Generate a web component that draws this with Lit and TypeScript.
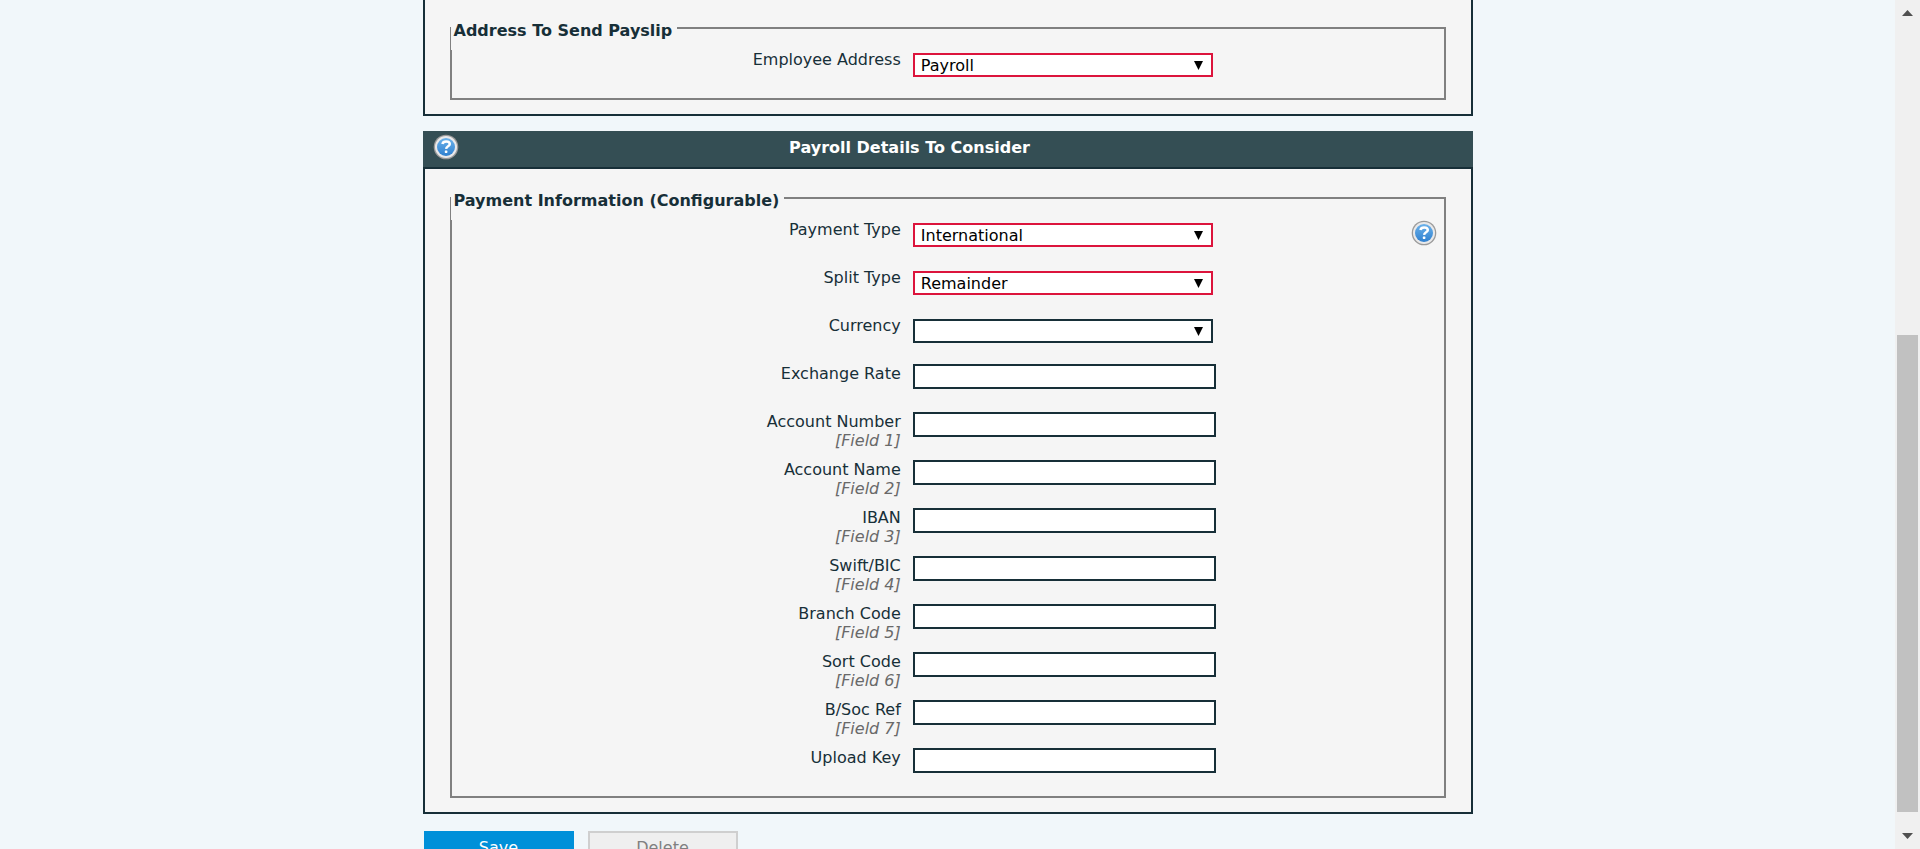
import { LitElement, html, css, svg, nothing } from "lit";
import { customElement, property } from "lit/decorators.js";

interface Field {
  id: string;
  label: string;
  hint?: string;
  options?: string[];
  required?: boolean;
  help?: boolean;
}

const addressFields: Field[] = [
  { id: "employee-address", label: "Employee Address", options: ["Payroll"], required: true },
];

const paymentFields: Field[] = [
  { id: "payment-type", label: "Payment Type", options: ["International"], required: true, help: true },
  { id: "split-type", label: "Split Type", options: ["Remainder"], required: true },
  { id: "currency", label: "Currency", options: [""] },
  { id: "exchange-rate", label: "Exchange Rate" },
  { id: "account-number", label: "Account Number", hint: "[Field 1]" },
  { id: "account-name", label: "Account Name", hint: "[Field 2]" },
  { id: "iban", label: "IBAN", hint: "[Field 3]" },
  { id: "swift", label: "Swift/BIC", hint: "[Field 4]" },
  { id: "branch-code", label: "Branch Code", hint: "[Field 5]" },
  { id: "sort-code", label: "Sort Code", hint: "[Field 6]" },
  { id: "bsoc-ref", label: "B/Soc Ref", hint: "[Field 7]" },
  { id: "upload-key", label: "Upload Key" },
];

@customElement("help-button")
export class HelpButton extends LitElement {
  static styles = css`
    :host {
      display: block;
      width: 26px;
      height: 26px;
    }
    .help {
      display: block;
      width: 26px;
      height: 26px;
      padding: 0;
      border: 0;
      background: none;
      cursor: pointer;
    }
    .glyph {
      display: block;
    }
  `;

  render() {
    return html`<button class="help" type="button" aria-label="Help">
      <svg class="glyph" width="26" height="26" viewBox="0 0 26 26" aria-hidden="true">
        <defs>
          <linearGradient id="ball" x1="0" y1="0" x2="0" y2="1">
            <stop offset="0" stop-color="#6cb2ea" />
            <stop offset="1" stop-color="#2f80cf" />
          </linearGradient>
        </defs>
        <circle cx="13" cy="13" r="12.3" fill="#9a9a9a" />
        <circle cx="13" cy="13" r="11" fill="#e9e9ea" />
        <circle cx="13" cy="13" r="9" fill="url(#ball)" />
        <path d="M9.4 9.9C9.8 8.1 11.3 7.4 13.1 7.4C15.3 7.4 16.8 8.4 16.8 10.1C16.8 12.3 13.3 12.2 13.1 14.8"
          fill="none" stroke="#fff" stroke-width="2.5" />
        <rect x="11.8" y="16.4" width="2.6" height="2.5" rx="0.6" fill="#fff" />
      </svg>
    </button>`;
  }
}

@customElement("field-group")
export class FieldGroup extends LitElement {
  @property() heading = "";
  @property({ attribute: false }) fields: Field[] = [];

  static styles = css`
    :host {
      display: block;
    }
    .group {
      margin: 0;
      padding: 0;
      border: 2px solid #808080;
      min-width: 0;
    }
    .legend {
      box-sizing: border-box;
      height: 44px;
      margin-left: -1px;
      padding: 6px 5px 0 3px;
      background: #f5f5f5;
      color: #172f38;
      font-weight: bold;
      line-height: 38px;
    }
    .row {
      display: grid;
      grid-template-columns: 46.5% 1fr auto;
      align-items: start;
      height: 48px;
    }
    .label {
      padding-right: 12px;
      text-align: right;
      line-height: 19px;
      color: #172f38;
    }
    .hint {
      display: block;
      color: #696969;
      font-style: italic;
    }
    .input,
    .select {
      box-sizing: border-box;
      margin: 0;
      border: 2px solid #172f38;
      border-radius: 0;
      background-color: #fff;
      color: #000;
      font: inherit;
      outline: none;
    }
    .input {
      width: 303px;
      height: 25px;
      padding: 0 6px;
    }
    .select {
      appearance: none;
      width: 300px;
      height: 24px;
      margin-top: 3px;
      padding: 1px 24px 0 6px;
      line-height: 19px;
      background-image: url("data:image/svg+xml,%3Csvg xmlns='http://www.w3.org/2000/svg' width='9' height='9'%3E%3Cpath d='M0 0H9L4.5 9Z'/%3E%3C/svg%3E");
      background-repeat: no-repeat;
      background-position: right 8px center;
    }
    .required {
      border-color: #dc143c;
    }
    .help {
      margin-right: 7px;
    }
  `;

  private control(f: Field) {
    return f.options
      ? html`<select id=${f.id} class=${f.required ? "select required" : "select"}>
          ${f.options.map((o) => html`<option>${o}</option>`)}
        </select>`
      : html`<input id=${f.id} class="input" type="text" />`;
  }

  render() {
    return html`<fieldset class="group">
      <legend class="legend">${this.heading}</legend>
      ${this.fields.map(
        (f) => html`<div class="row">
          <label class="label" for=${f.id}>${f.label}${f.hint ? html`<span class="hint">${f.hint}</span>` : nothing}</label>
          <div>${this.control(f)}</div>
          ${f.help ? html`<help-button class="help"></help-button>` : nothing}
        </div>`
      )}
    </fieldset>`;
  }
}

@customElement("app-root")
export class AppRoot extends LitElement {
  static styles = css`
    :host {
      display: flex;
      height: 100vh;
      overflow: hidden;
      background: #f1f7fa;
      font-family: Verdana, "DejaVu Sans", sans-serif;
      font-size: 16px;
    }
    .page {
      flex: 1;
      min-width: 0;
      overflow: hidden;
    }
    .form {
      max-width: 1050px;
      margin: 0 auto;
    }
    .panel {
      border: 2px solid #172f38;
      border-top: 0;
      padding: 6px 25px 14px;
      background: #f5f5f5;
    }
    .titled {
      padding-top: 7px;
    }
    .header {
      display: grid;
      grid-template-columns: 76px 1fr 152px;
      align-items: center;
      height: 36px;
      margin-top: 15px;
      border-bottom: 2px solid #172f38;
      background: #344e54;
    }
    .header-help {
      margin-left: 10px;
      margin-bottom: 4px;
    }
    .title {
      margin: 0;
      padding-bottom: 2px;
      color: #fff;
      font-size: 16px;
      line-height: 32px;
      text-align: center;
    }
    .actions {
      display: flex;
      gap: 14px;
      margin-top: 17px;
      padding-left: 1px;
    }
    .button {
      box-sizing: border-box;
      width: 150px;
      height: 32px;
      padding: 0;
      border: 2px solid #0090d9;
      background: #0090d9;
      color: #fff;
      font: inherit;
    }
    .muted {
      border-color: #cfcfcf;
      background: #efefef;
      color: #808080;
    }
    .scrollbar {
      display: flex;
      flex-direction: column;
      align-items: center;
      width: 25px;
      background: #f0f0f0;
    }
    .arrow {
      flex: none;
      display: block;
    }
    .track {
      flex: 1;
      display: flex;
      flex-direction: column;
      width: 21px;
    }
    .before {
      flex: 309;
    }
    .thumb {
      flex: 477;
      background: #c1c1c1;
    }
    .after {
      flex: 11;
    }
  `;

  private arrow(points: string) {
    return html`<svg class="arrow" width="25" height="26" viewBox="0 0 25 26" aria-hidden="true">
      ${svg`<path d=${points} fill="#505050" />`}
    </svg>`;
  }

  render() {
    return html`
      <main class="page">
        <form class="form">
          <section class="panel">
            <field-group heading="Address To Send Payslip" .fields=${addressFields}></field-group>
          </section>
          <header class="header">
            <help-button class="header-help"></help-button>
            <h2 class="title">Payroll Details To Consider</h2>
          </header>
          <section class="panel titled">
            <field-group heading="Payment Information (Configurable)" .fields=${paymentFields}></field-group>
          </section>
          <div class="actions">
            <button class="button" type="button">Save</button>
            <button class="button muted" type="button">Delete</button>
          </div>
        </form>
      </main>
      <div class="scrollbar" aria-hidden="true">
        ${this.arrow("M7 16L12.5 10L18 16Z")}
        <div class="track">
          <div class="before"></div>
          <div class="thumb"></div>
          <div class="after"></div>
        </div>
        ${this.arrow("M7 10L12.5 16L18 10Z")}
      </div>
    `;
  }
}
